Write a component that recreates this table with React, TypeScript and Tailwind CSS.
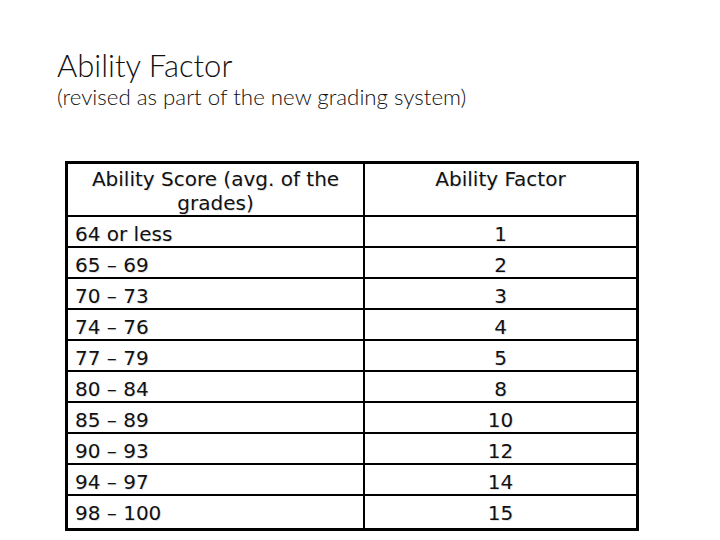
import React from "react";

const rows: [string, string][] = [
  ["64 or less", "1"],
  ["65 – 69", "2"],
  ["70 – 73", "3"],
  ["74 – 76", "4"],
  ["77 – 79", "5"],
  ["80 – 84", "8"],
  ["85 – 89", "10"],
  ["90 – 93", "12"],
  ["94 – 97", "14"],
  ["98 – 100", "15"],
];

export default function App() {
  return (
    <div className="w-[720px] h-[540px] bg-white overflow-hidden pl-[57px] pt-[47px]">
      <div className="font-['Lato',sans-serif] font-light text-[#111] text-[31px] leading-[36px]">
        Ability Factor
      </div>
      <div className="font-['Lato',sans-serif] font-light text-[#111] text-[22.3px] leading-[28px]">
        (revised as part of the new grading system)
      </div>
      <div className="ml-[8px] mt-[50px] w-[574px] h-[370px] border-[3px] border-black flex flex-col font-['DejaVu_Sans','Verdana',sans-serif] text-[20px] text-[#111] [text-shadow:1px_1px_0_rgba(0,0,0,0.12)]">
        <div className="grid grid-cols-[297px_1fr] h-[53px] border-b-2 border-black">
          <div className="border-r-2 border-black text-center leading-[24px] pt-[3px]">
            Ability Score (avg. of the grades)
          </div>
          <div className="text-center leading-[24px] pt-[3px]">Ability Factor</div>
        </div>
        {rows.map(([score, factor], i) => (
          <div
            key={score}
            className={
              i === rows.length - 1
                ? "grid grid-cols-[297px_1fr] flex-1"
                : "grid grid-cols-[297px_1fr] h-[31px] border-b-2 border-black"
            }
          >
            <div className="border-r-2 border-black pl-[7px] pt-[2px] flex items-center">{score}</div>
            <div className="pt-[2px] flex items-center justify-center">{factor}</div>
          </div>
        ))}
      </div>
    </div>
  );
}
